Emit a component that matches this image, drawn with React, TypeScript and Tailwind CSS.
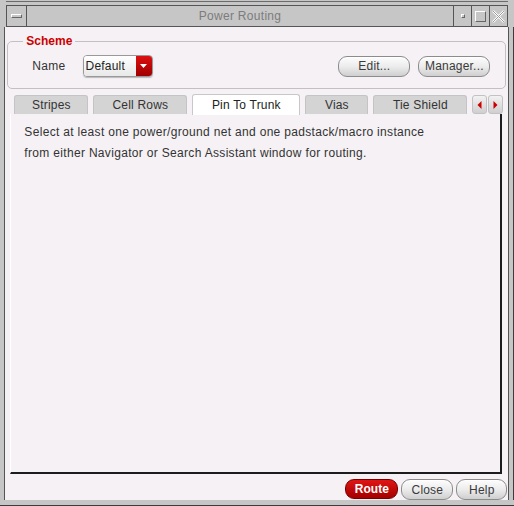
import React from "react";

const font = { fontFamily: '"Liberation Sans", Arial, sans-serif' };

function PillButton({ label, w }: { label: string; w: string }) {
  return (
    <button
      type="button"
      className={`${w} h-[21px] rounded-[9px] border border-[#8c8c8c] bg-gradient-to-b from-[#fdfdfd] via-[#ececec] to-[#cfcfcf] text-[12px] text-[#3a3a3a] leading-none tracking-[0.2px] shadow-[inset_0_1px_0_#fff]`}
    >
      {label}
    </button>
  );
}

function Tab({ label, w, active }: { label: string; w: string; active?: boolean }) {
  if (active) {
    return (
      <div
        className={`${w} h-[21px] -mb-px flex items-center justify-center rounded-t-[3px] border border-b-0 border-[#c8c8c8] bg-white text-[12px] text-[#222] tracking-[0.2px]`}
      >
        {label}
      </div>
    );
  }
  return (
    <div
      className={`${w} h-[19px] flex items-center justify-center rounded-t-[3px] border border-b-0 border-[#c4c4c4] bg-[#d4d4d4] text-[12px] text-[#333] tracking-[0.2px]`}
    >
      {label}
    </div>
  );
}

function ArrowBtn({ dir }: { dir: "left" | "right" }) {
  return (
    <div className="h-[19px] w-[15px] flex items-center justify-center rounded-[3px] border border-[#c2c2c2] bg-gradient-to-b from-[#f2f2f2] to-[#cfcfcf]">
      <svg width="5" height="8" viewBox="0 0 5 8">
        {dir === "left" ? (
          <polygon points="4.5,0 4.5,8 0.5,4" fill="#cc0000" />
        ) : (
          <polygon points="0.5,0 0.5,8 4.5,4" fill="#cc0000" />
        )}
      </svg>
    </div>
  );
}

export default function App() {
  return (
    <div
      className="w-[514px] h-[506px] bg-[#c6c6c6] flex flex-col border-b border-[#3c3c3c] overflow-hidden"
      style={font}
    >
      {/* title bar */}
      <div className="mx-[6px] mt-[1px] border-t border-[#6a6a6a]" />
      <div className="mx-[6px] mt-[3px] h-[22px] flex border border-[#555] bg-[#c6c6c6]">
        <div className="w-[20px] flex items-center justify-center border-r border-[#555]">
          <div className="w-[11px] h-[4px] border border-t-white border-l-white border-r-[#666] border-b-[#666] bg-[#c6c6c6]" />
        </div>
        <div className="flex-1 flex items-center justify-center text-[12px] text-[#7c7c7c] tracking-[0.3px]">
          Power Routing
        </div>
        <div className="w-[18px] flex items-center justify-center border-l border-[#555]">
          <div className="w-[4px] h-[4px] border border-t-white border-l-white border-r-[#666] border-b-[#666]" />
        </div>
        <div className="w-[18px] flex items-center justify-center border-l border-[#555]">
          <div className="w-[11px] h-[11px] border border-t-white border-l-white border-r-[#666] border-b-[#666]" />
        </div>
        <div className="w-[18px] flex items-center justify-center border-l border-[#555]">
          <svg width="13" height="13" viewBox="0 0 13 13">
            <path d="M1 1 L12 12 M12 1 L1 12" stroke="#fff" strokeWidth="2.4" />
            <path d="M1 1 L12 12 M12 1 L1 12" stroke="#9a9a9a" strokeWidth="1" />
          </svg>
        </div>
      </div>

      {/* body */}
      <div className="flex-1 flex">
        <div className="w-[7px] border-r border-[#555]" />
        <div className="flex-1 flex flex-col bg-[#f5f1f5]">
          <fieldset className="mx-[2px] mt-[7px] h-[55px] rounded-[5px] border border-[#c3c0c3] px-[12px]">
            <legend className="px-[3px] ml-[3px] text-[12px] font-bold text-[#cc0000] leading-[14px]">
              Scheme
            </legend>
            <div className="mt-[7px] flex items-center">
              <span className="ml-[12px] text-[12px] text-[#333] tracking-[0.3px]">Name</span>
              <div className="ml-[17px] h-[22px] w-[70px] flex rounded-[4px] border border-[#999] overflow-hidden shadow-[0_1px_1px_#bbb]">
                <div className="flex-1 flex items-center pl-[2px] bg-gradient-to-b from-white to-[#e8e8e8] text-[12px] text-[#222] tracking-[0.2px]">
                  Default
                </div>
                <div className="w-[16px] flex items-center justify-center bg-gradient-to-b from-[#dd1111] to-[#a00000]">
                  <svg width="7" height="4" viewBox="0 0 7 4">
                    <polygon points="0,0 7,0 3.5,4" fill="#fff" />
                  </svg>
                </div>
              </div>
              <div className="flex-1" />
              <PillButton label="Edit..." w="w-[72px]" />
              <div className="w-[8px]" />
              <PillButton label="Manager..." w="w-[72px]" />
              <div className="w-[3px]" />
            </div>
          </fieldset>

          {/* tabs */}
          <div className="mt-[5px] ml-[9px] mr-[5px] flex items-end gap-[5px] relative z-10">
            <Tab label="Stripes" w="w-[74px]" />
            <Tab label="Cell Rows" w="w-[94px]" />
            <Tab label="Pin To Trunk" w="w-[108px]" active />
            <Tab label="Vias" w="w-[63px]" />
            <Tab label="Tie Shield" w="w-[94px]" />
            <div className="flex gap-px">
              <ArrowBtn dir="left" />
              <ArrowBtn dir="right" />
            </div>
          </div>

          {/* panel */}
          <div className="ml-[5px] mr-[6px] h-[360px] border-l border-l-white border-r-[2px] border-b-[2px] border-r-[#1c1c1c] border-b-[#1c1c1c] bg-[#f5f1f5] px-[13px] pt-[8px] text-[12px] leading-[21px] tracking-[0.32px] text-[#333]">
            <p>Select at least one power/ground net and one padstack/macro instance</p>
            <p>from either Navigator or Search Assistant window for routing.</p>
          </div>

          {/* bottom buttons */}
          <div className="mt-[5px] mr-[1px] flex justify-end gap-[3px]">
            <button
              type="button"
              className="w-[53px] h-[20px] rounded-[9px] border border-[#7a0000] bg-gradient-to-b from-[#e01515] to-[#a50000] text-[12px] font-bold text-white leading-none"
            >
              Route
            </button>
            <PillButton label="Close" w="w-[52px]" />
            <PillButton label="Help" w="w-[51px]" />
          </div>
          <div className="flex-1" />
        </div>
        <div className="w-[7px] border-l border-[#555] border-r border-r-[#3c3c3c]" />
      </div>
      <div className="h-[5px]" />
    </div>
  );
}
